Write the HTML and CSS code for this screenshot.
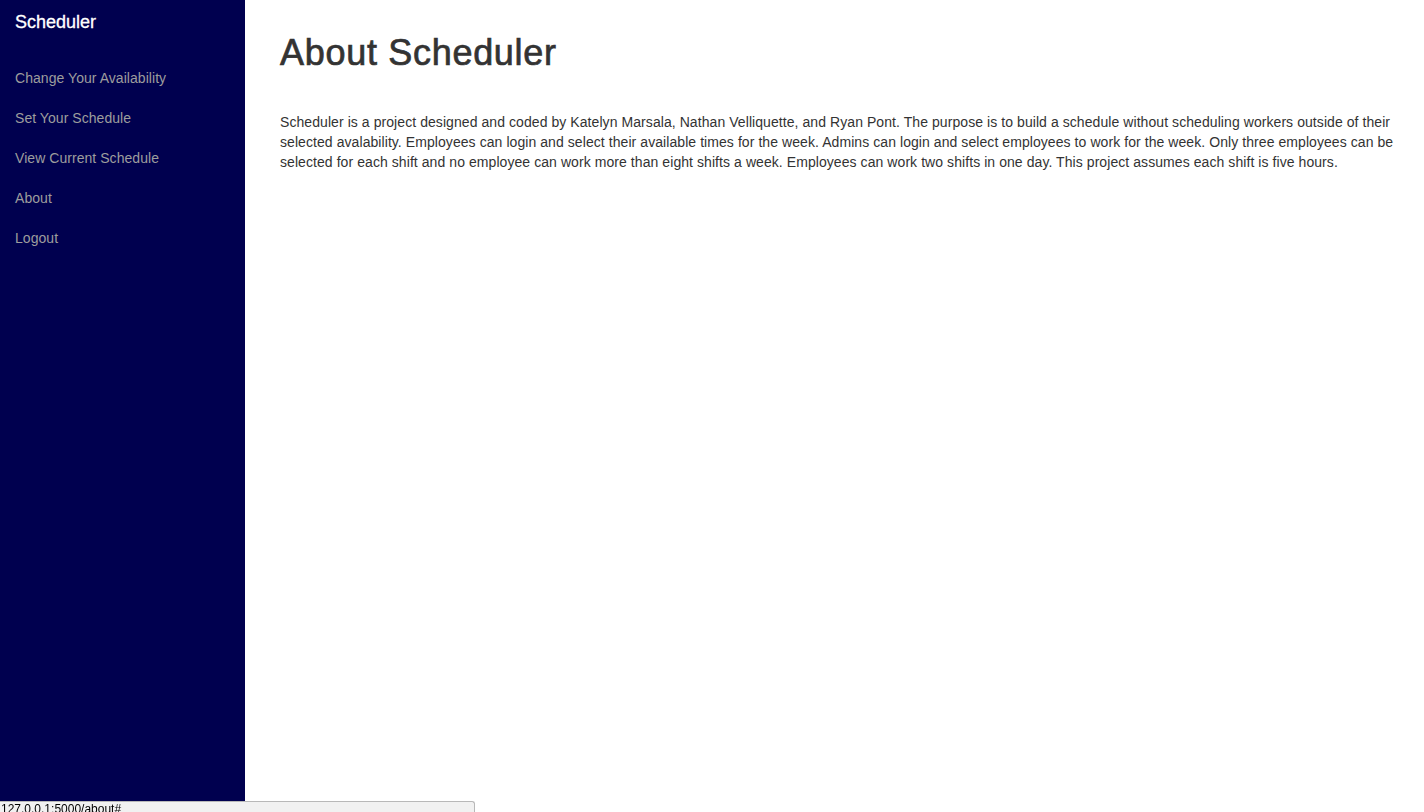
FILE: index.html
```html
<!DOCTYPE html>
<html lang="en">
<head>
<meta charset="utf-8">
<title>About Scheduler</title>
<link rel="stylesheet" href="styles.css">
</head>
<body>
<div class="layout">
  <aside class="sidebar">
    <a class="brand" href="#">Scheduler</a>
    <ul class="nav">
      <li><a href="#">Change Your Availability</a></li>
      <li><a href="#">Set Your Schedule</a></li>
      <li><a href="#">View Current Schedule</a></li>
      <li><a href="#">About</a></li>
      <li><a href="#">Logout</a></li>
    </ul>
  </aside>
  <main class="main">
    <h1 class="title">About Scheduler</h1>
    <p class="about">Scheduler is a project designed and coded by Katelyn Marsala, Nathan Velliquette, and Ryan Pont. The purpose is to build a schedule without scheduling workers outside of their selected avalability. Employees can login and select their available times for the week. Admins can login and select employees to work for the week. Only three employees can be selected for each shift and no employee can work more than eight shifts a week. Employees can work two shifts in one day. This project assumes each shift is five hours.</p>
  </main>
</div>
<div class="status">127.0.0.1:5000/about#</div>
</body>
</html>
```

FILE: styles.css
```css
html, body {
  margin: 0;
  padding: 0;
  height: 100%;
}
body {
  font-family: "Liberation Sans", Arial, sans-serif;
  font-size: 14px;
  line-height: 20px;
  color: #333333;
  background: #ffffff;
}
.layout {
  display: flex;
  min-height: 100vh;
}
.sidebar {
  width: 245px;
  flex: 0 0 245px;
  background: #00004f;
  display: flex;
  flex-direction: column;
}
.brand {
  display: block;
  padding: 12px 15px 18px;
  font-size: 18px;
  line-height: 20px;
  color: #ffffff;
  text-decoration: none;
  -webkit-text-stroke: 0.3px #ffffff;
}
.nav {
  list-style: none;
  margin: 8px 0 0;
  padding: 0;
}
.nav a {
  display: block;
  padding: 10px 15px;
  line-height: 20px;
  color: #9d9d9d;
  text-decoration: none;
  letter-spacing: 0.05px;
}
.main {
  flex: 1;
  padding: 0 22px 0 35px;
}
.title {
  margin: 33px 0 39px;
  font-size: 36px;
  line-height: 40px;
  font-weight: 400;
  letter-spacing: 0.7px;
  -webkit-text-stroke: 0.7px #333333;
  color: #333333;
}
.about {
  margin: 0;
  color: #333333;
  letter-spacing: 0.07px;
}
.status {
  position: fixed;
  left: 0;
  bottom: 0;
  width: 473px;
  height: 10px;
  background: #f1f1f1;
  border: 1px solid #b8b8b8;
  border-left: none;
  border-bottom: none;
  border-top-right-radius: 3px;
  font-family: "Liberation Sans", Arial, sans-serif;
  font-size: 12px;
  line-height: 14px;
  color: #000;
  overflow: hidden;
  padding-left: 1px;
}
```
